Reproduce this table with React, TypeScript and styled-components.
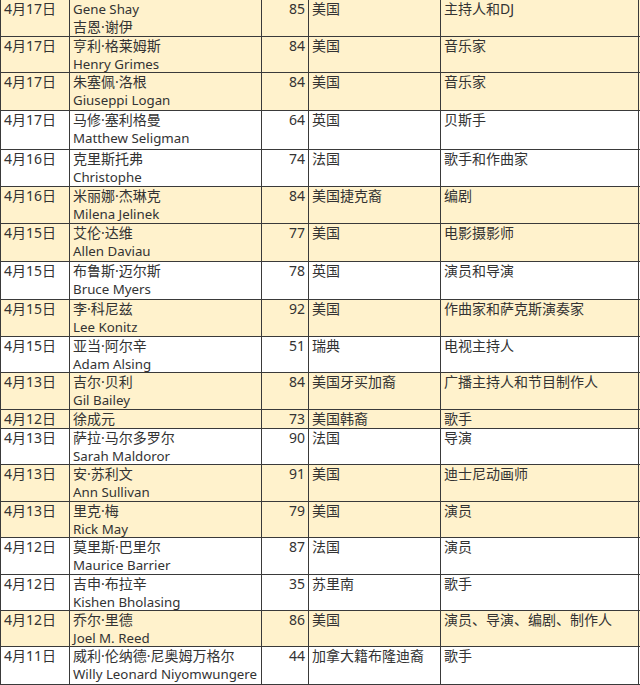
import React from "react";
import styled, { createGlobalStyle } from "styled-components";

const GlobalStyle = createGlobalStyle`
  html, body {
    margin: 0;
    padding: 0;
    background: #ffffff;
  }
  body {
    font-family: "Noto Sans", "Noto Sans CJK SC", sans-serif;
    color: #333333;
  }
`;

const Sheet = styled.div`
  display: flex;
  flex-direction: column;
  width: 639px;
  border-left: 1px solid #3a3a3a;
  overflow: hidden;
`;

const Row = styled.div<{ $hl: boolean; $h: number }>`
  display: grid;
  grid-template-columns: 69px 192px 47px 132px 198px;
  height: ${({ $h }) => $h}px;
  box-sizing: border-box;
  border-bottom: 1px solid #3a3a3a;
  background: ${({ $hl }) => ($hl ? "#fff2cc" : "#ffffff")};
`;

const Cell = styled.div<{ $right?: boolean }>`
  border-right: 1px solid #3a3a3a;
  padding: 0 3px;
  font-size: 14px;
  line-height: 18px;
  white-space: nowrap;
  min-width: 0;
  text-align: ${({ $right }) => ($right ? "right" : "left")};
`;

const Line = styled.div<{ $latin: boolean }>`
  height: 18px;
  font-size: ${({ $latin }) => ($latin ? "13.3px" : "14px")};
`;

type Person = {
  date: string;
  names: string[];
  age: number;
  country: string;
  job: string;
  hl: boolean;
  h: number;
};

const people: Person[] = [
  { date: "4月17日", names: ["Gene Shay", "吉恩·谢伊"], age: 85, country: "美国", job: "主持人和DJ", hl: true, h: 37 },
  { date: "4月17日", names: ["亨利·格莱姆斯", "Henry Grimes"], age: 84, country: "美国", job: "音乐家", hl: true, h: 36 },
  { date: "4月17日", names: ["朱塞佩·洛根", "Giuseppi Logan"], age: 84, country: "美国", job: "音乐家", hl: true, h: 38 },
  { date: "4月17日", names: ["马修·塞利格曼", "Matthew Seligman"], age: 64, country: "英国", job: "贝斯手", hl: false, h: 39 },
  { date: "4月16日", names: ["克里斯托弗", "Christophe"], age: 74, country: "法国", job: "歌手和作曲家", hl: false, h: 37 },
  { date: "4月16日", names: ["米丽娜·杰琳克", "Milena Jelinek"], age: 84, country: "美国捷克裔", job: "编剧", hl: true, h: 37 },
  { date: "4月15日", names: ["艾伦·达维", "Allen Daviau"], age: 77, country: "美国", job: "电影摄影师", hl: true, h: 38 },
  { date: "4月15日", names: ["布鲁斯·迈尔斯", "Bruce Myers"], age: 78, country: "英国", job: "演员和导演", hl: false, h: 38 },
  { date: "4月15日", names: ["李·科尼兹", "Lee Konitz"], age: 92, country: "美国", job: "作曲家和萨克斯演奏家", hl: true, h: 37 },
  { date: "4月15日", names: ["亚当·阿尔辛", "Adam Alsing"], age: 51, country: "瑞典", job: "电视主持人", hl: false, h: 36 },
  { date: "4月13日", names: ["吉尔·贝利", "Gil Bailey"], age: 84, country: "美国牙买加裔", job: "广播主持人和节目制作人", hl: true, h: 37 },
  { date: "4月12日", names: ["徐成元"], age: 73, country: "美国韩裔", job: "歌手", hl: true, h: 19 },
  { date: "4月13日", names: ["萨拉·马尔多罗尔", "Sarah Maldoror"], age: 90, country: "法国", job: "导演", hl: false, h: 36 },
  { date: "4月13日", names: ["安·苏利文", "Ann Sullivan"], age: 91, country: "美国", job: "迪士尼动画师", hl: true, h: 37 },
  { date: "4月13日", names: ["里克·梅", "Rick May"], age: 79, country: "美国", job: "演员", hl: true, h: 36 },
  { date: "4月12日", names: ["莫里斯·巴里尔", "Maurice Barrier"], age: 87, country: "法国", job: "演员", hl: false, h: 37 },
  { date: "4月12日", names: ["吉申·布拉辛", "Kishen Bholasing"], age: 35, country: "苏里南", job: "歌手", hl: false, h: 36 },
  { date: "4月12日", names: ["乔尔·里德", "Joel M. Reed"], age: 86, country: "美国", job: "演员、导演、编剧、制作人", hl: true, h: 36 },
  { date: "4月11日", names: ["威利·伦纳德·尼奥姆万格尔", "Willy Leonard Niyomwungere"], age: 44, country: "加拿大籍布隆迪裔", job: "歌手", hl: false, h: 38 },
];

const isLatin = (s: string) => /^[A-Za-z]/.test(s);

const App: React.FC = () => {
  return (
    <>
      <GlobalStyle />
      <Sheet>
        {people.map((p, i) => (
          <Row key={i} $hl={p.hl} $h={p.h}>
            <Cell>{p.date}</Cell>
            <Cell>
              {p.names.map((n) => (
                <Line key={n} $latin={isLatin(n)}>
                  {n}
                </Line>
              ))}
            </Cell>
            <Cell $right>{p.age}</Cell>
            <Cell>{p.country}</Cell>
            <Cell>{p.job}</Cell>
          </Row>
        ))}
      </Sheet>
    </>
  );
};

export default App;
